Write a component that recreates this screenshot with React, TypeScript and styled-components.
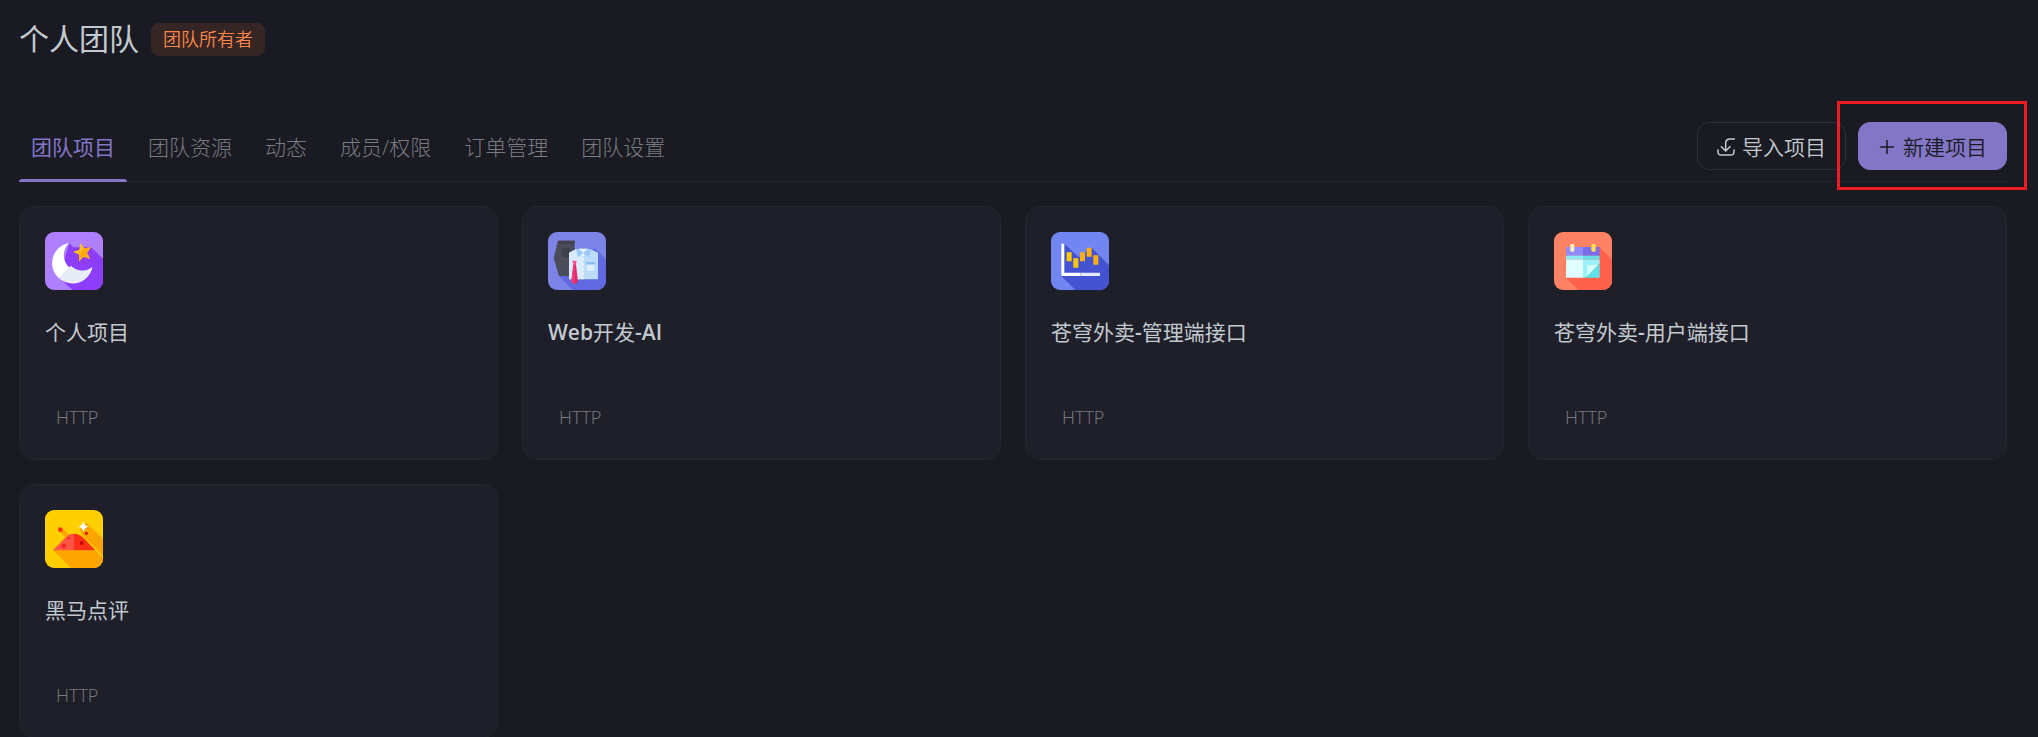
import React, { useState } from "react";
import styled, { createGlobalStyle } from "styled-components";

const color = {
  page: "#1a1a23",
  card: "#1f1f2a",
  line: "#252531",
  outline: "#2f2f3c",
  text: "#c3cacf",
  muted: "#7a7b80",
  accent: "#8376c7",
  owner: "#ff8548",
  ownerBg: "#352524",
  highlight: "#ed1c24",
};

const GlobalStyle = createGlobalStyle`
  * { box-sizing: border-box; }
  body {
    margin: 0;
    background: ${color.page};
    color: ${color.text};
    font-family: "Open Sans", "Noto Sans CJK SC", sans-serif;
  }
  button { font-family: inherit; }
`;

const Page = styled.main`
  height: 100vh;
  overflow-y: auto;
  scrollbar-width: none;
  padding: 18px 31px 0 19px;
`;

const Header = styled.header`
  display: flex;
  align-items: center;
  gap: 12px;
  margin-bottom: 62px;
`;

const TeamName = styled.h1`
  margin: 0;
  font-size: 30px;
  line-height: 42px;
  font-weight: 400;
`;

const OwnerBadge = styled.span`
  padding: 0 12px;
  border-radius: 8px;
  background: ${color.ownerBg};
  color: ${color.owner};
  font-size: 18px;
  line-height: 33px;
  font-weight: 350;
`;

const Toolbar = styled.div`
  display: flex;
  justify-content: space-between;
  align-items: flex-start;
  border-bottom: 1px solid ${color.line};
`;

const Tabs = styled.div`
  display: flex;
  gap: 9px;
  margin-bottom: -1px;
`;

const Tab = styled.button<{ $active: boolean }>`
  position: relative;
  padding: 9px 12px 19px;
  border: 0;
  background: none;
  color: ${(p) => (p.$active ? color.accent : color.muted)};
  font-size: 21px;
  line-height: 32px;
  font-weight: ${(p) => (p.$active ? 400 : 300)};
  cursor: pointer;

  &::after {
    content: "";
    position: absolute;
    left: 0;
    right: 0;
    bottom: 0;
    height: 3px;
    border-radius: 3px 3px 0 0;
    background: ${(p) => (p.$active ? color.accent : "transparent")};
  }
`;

const Actions = styled.div`
  display: flex;
  gap: 12px;
`;

const ActionButton = styled.button<{ $primary?: boolean }>`
  display: flex;
  align-items: center;
  gap: 7px;
  height: 48px;
  padding: 2px 19px 0;
  border: 1px solid ${(p) => (p.$primary ? color.accent : color.outline)};
  border-radius: 12px;
  background: ${(p) => (p.$primary ? color.accent : "transparent")};
  color: ${(p) => (p.$primary ? color.page : color.text)};
  font-size: 21px;
  line-height: 32px;
  font-weight: 350;
  cursor: pointer;
`;

const Highlighted = styled.div`
  position: relative;

  &::after {
    content: "";
    position: absolute;
    inset: -21px -20px -20px -21px;
    border: 3px solid ${color.highlight};
    pointer-events: none;
  }
`;

const ProjectGrid = styled.section`
  display: grid;
  grid-template-columns: repeat(4, minmax(0, 1fr));
  gap: 24px;
  margin-top: 24px;
`;

const Card = styled.article`
  display: flex;
  flex-direction: column;
  min-height: 254px;
  padding: 25px;
  border: 1px solid ${color.line};
  border-radius: 15px;
  background: ${color.card};
`;

const ProjectIcon = styled.svg`
  width: 58px;
  height: 58px;
  border-radius: 9px;
`;

const ProjectName = styled.h2`
  margin: 26px 0 0;
  font-size: 21px;
  line-height: 32px;
  font-weight: 400;
`;

const Latin = styled.span`
  font-weight: 600;
`;

const Protocol = styled.span`
  margin: auto 0 4px;
  padding: 0 11px;
  color: ${color.muted};
  font-size: 18px;
  line-height: 26px;
  font-weight: 300;
`;

const ImportIcon = () => (
  <svg width="18" height="18" viewBox="0 0 54 54" fill="none" stroke="currentColor" strokeWidth="4.5" strokeLinecap="round" strokeLinejoin="round" aria-hidden="true">
    <path d="M52 3H39Q26 3 26 16V38M13 26L26 39L39 26" />
    <path d="M3 36V41Q3 51 13 51H41Q51 51 51 41V36" />
  </svg>
);

const PlusIcon = () => (
  <svg width="18" height="18" viewBox="0 0 18 18" fill="none" stroke="currentColor" strokeWidth="1.5" strokeLinecap="round" aria-hidden="true">
    <path d="M9 2.5V15.5M2.5 9H15.5" />
  </svg>
);

const MoonArt = () => (
  <>
    <rect width="174" height="174" fill="#ae80ff" />
    <path d="M73 34L84 46H138L174 80V174H82L42 136Z" fill="#8c3dff" />
    <path d="M72 33A61 61 0 1 0 142 106A50 50 0 0 1 72 33Z" fill="#fff" />
    <path d="M142 106A61 61 0 0 1 41 136L78 101A50 50 0 0 0 142 106Z" fill="#e6ebf5" />
    <path d="M106 33L118 49L138 46L126 62L135 80L116 74L102 88L102 68L84 59L103 53Z" fill="#ffc01f" />
    <path d="M118 49L138 46L126 62L135 80L116 74L102 88L102 68Z" fill="#ffa90f" />
  </>
);

const ClothesArt = () => (
  <>
    <rect width="174" height="174" fill="#7d84e8" />
    <path d="M140 48L174 82V174H74L33 132Z" fill="#6069e2" />
    <path d="M30 26H80V68L65 74V132H33L17 78Z" fill="#4c4d5a" />
    <path d="M30 26H80V36H30Z" fill="#42434e" />
    <path d="M41 48H66V76H50Q41 72 41 60Z" fill="#3f404b" />
    <path d="M63 62L84 52H127L150 62V142H63Z" fill="#bcdcfb" />
    <path d="M63 62L84 52L106 64V142H63Z" fill="#d9ecff" />
    <path d="M84 52L90 76L106 62L122 76L129 52L118 50H95Z" fill="#9cc9f7" />
    <path d="M92 50H120L106 62Z" fill="#eaf5ff" />
    <path d="M106 66V140" stroke="#fff" strokeWidth="3" strokeDasharray="5 9" />
    <path d="M114 90H141V97H114Z" fill="#8dbef3" />
    <path d="M117 99H139V116H117Z" fill="#e1f0ff" />
    <path d="M73 86H86L84 97H76Z" fill="#ff5386" />
    <path d="M76 97H84L90 150L80 157L70 150Z" fill="#e52a66" />
    <path d="M76 97H80V157L70 150Z" fill="#f33c78" />
  </>
);

const ChartArt = () => (
  <>
    <rect width="174" height="174" fill="#7186f3" />
    <path d="M40 35L84 76L122 47L174 100V174H73L31 132Z" fill="#4453d2" />
    <path d="M31 35H40V122H88V132H31Z" fill="#fff" />
    <path d="M88 122H147V132H88Z" fill="#e4e9f6" />
    <path d="M47 61H62V88H47ZM67 79H82V107H67Z" fill="#ffca05" />
    <path d="M87 61H102V88H87ZM107 47H122V74H107ZM127 70H142V98H127Z" fill="#ffae0c" />
  </>
);

const CalendarArt = () => (
  <>
    <rect width="174" height="174" fill="#ff8264" />
    <path d="M137 46L174 83V174H73L36 137Z" fill="#ff614b" />
    <path d="M36 45H87V71H36Z" fill="#918bff" />
    <path d="M87 45H137V71H87Z" fill="#7b6de9" />
    <path d="M36 71H87V83H36Z" fill="#8ceaf0" />
    <path d="M87 71H137V83H87Z" fill="#6adde9" />
    <path d="M36 83H87V137H36Z" fill="#e0ffff" />
    <path d="M87 83H137V94L94 137H87Z" fill="#9af2f6" />
    <path d="M137 94V137H94Z" fill="#61e0ea" />
    <path d="M100 99H132L100 131Z" fill="#d8feff" />
    <rect x="49" y="36" width="12" height="23" rx="4" fill="#fff1b8" />
    <rect x="112" y="36" width="13" height="23" rx="4" fill="#ffde55" />
  </>
);

const MoundArt = () => (
  <>
    <rect width="174" height="174" fill="#ffcf00" />
    <path d="M24 121H151L174 144V174H77Z" fill="#ffa500" />
    <path d="M51 54L80 80L65 85L41 64Z" fill="#ffa500" />
    <path d="M124 38L174 86V137L110 73L105 56Z" fill="#ffa500" />
    <path d="M24 121L60 84Q72 71 87 71V121Z" fill="#ff5446" />
    <path d="M151 121L116 84Q102 71 87 71V121Z" fill="#ff3015" />
    <circle cx="46" cy="59" r="7" fill="#ff3015" />
    <circle cx="56" cy="108" r="7" fill="#f4271e" />
    <circle cx="72" cy="85" r="4" fill="#f4271e" />
    <circle cx="110" cy="99" r="6" fill="#c00518" />
    <circle cx="124" cy="70" r="5" fill="#d42208" />
    <path d="M115 33Q117 48 131 50Q117 52 115 67Q113 52 99 50Q113 48 115 33Z" fill="#fff" />
  </>
);

const tabs = ["团队项目", "团队资源", "动态", "成员/权限", "订单管理", "团队设置"];

const projects = [
  { name: "个人项目", Art: MoonArt },
  { name: "Web开发-AI", Art: ClothesArt },
  { name: "苍穹外卖-管理端接口", Art: ChartArt },
  { name: "苍穹外卖-用户端接口", Art: CalendarArt },
  { name: "黑马点评", Art: MoundArt },
];

const MixedText = ({ text }: { text: string }) => (
  <>
    {text.split(/([A-Za-z-]+)/).map((run, i) =>
      i % 2 ? <Latin key={i}>{run}</Latin> : run
    )}
  </>
);

export default function App() {
  const [active, setActive] = useState(tabs[0]);

  return (
    <>
      <GlobalStyle />
      <Page>
        <Header>
          <TeamName>个人团队</TeamName>
          <OwnerBadge>团队所有者</OwnerBadge>
        </Header>
        <Toolbar>
          <Tabs role="tablist">
            {tabs.map((tab) => (
              <Tab
                key={tab}
                type="button"
                role="tab"
                aria-selected={tab === active}
                $active={tab === active}
                onClick={() => setActive(tab)}
              >
                {tab}
              </Tab>
            ))}
          </Tabs>
          <Actions>
            <ActionButton type="button">
              <ImportIcon />
              导入项目
            </ActionButton>
            <Highlighted>
              <ActionButton type="button" $primary>
                <PlusIcon />
                新建项目
              </ActionButton>
            </Highlighted>
          </Actions>
        </Toolbar>
        <ProjectGrid>
          {projects.map(({ name, Art }) => (
            <Card key={name}>
              <ProjectIcon viewBox="0 0 174 174" aria-hidden="true">
                <Art />
              </ProjectIcon>
              <ProjectName>
                <MixedText text={name} />
              </ProjectName>
              <Protocol>HTTP</Protocol>
            </Card>
          ))}
        </ProjectGrid>
      </Page>
    </>
  );
}
